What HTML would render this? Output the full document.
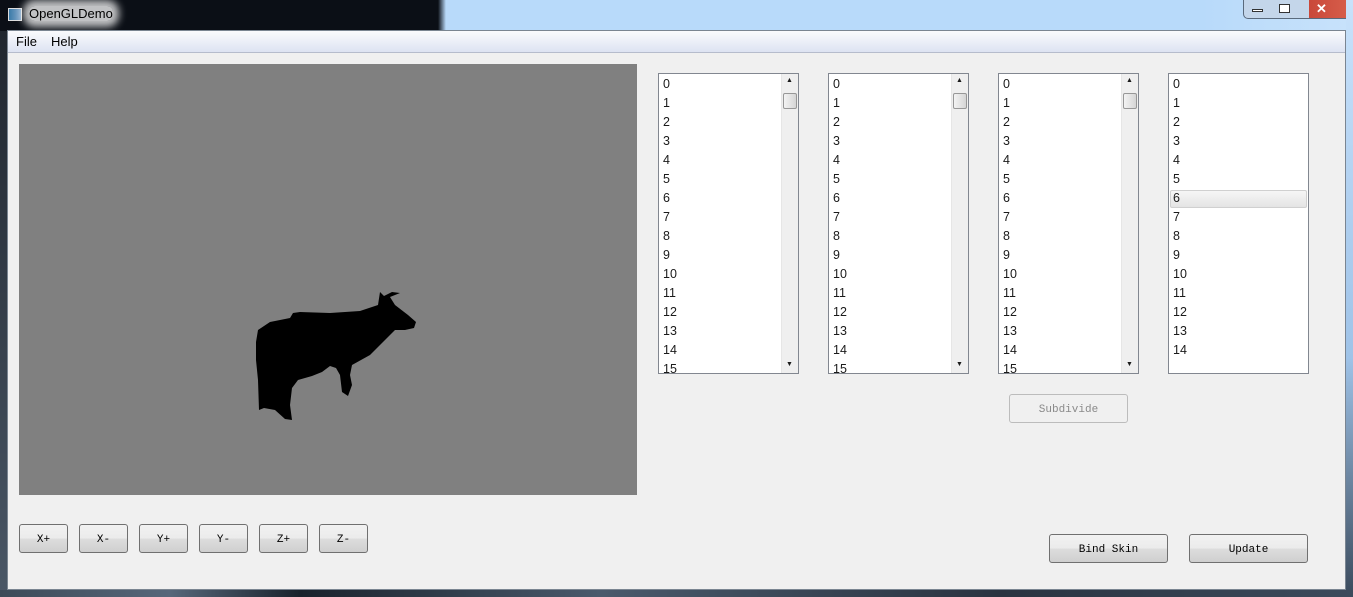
<!DOCTYPE html>
<html><head><style>
*{margin:0;padding:0;box-sizing:border-box}
body{width:1353px;height:597px;position:relative;overflow:hidden;background:#0c1118;font-family:"Liberation Sans",sans-serif}
.abs{position:absolute}
.title{left:0;top:0;width:1353px;height:31px;background:linear-gradient(90deg,#0b0f16 0,#0b0f16 438px,#b8dafa 446px,#b8dafa 1200px,#c8e2fb 1353px)}
.frameR{left:1346px;top:0;width:7px;height:597px;background:linear-gradient(180deg,#c8e2fb,#9fc3e8 60%,#3a4a5c)}
.frameB{left:0;top:590px;width:1353px;height:7px;background:linear-gradient(90deg,#3d4a58,#56677a 170px,#1a222c 300px,#4a5a6c 600px,#2a3340 1000px,#3c4b5c)}
.frameL{left:0;top:31px;width:7px;height:566px;background:linear-gradient(180deg,#20262e,#4a5766)}
.client{left:7px;top:30px;width:1339px;height:560px;background:#f0f0f0;border:1px solid #7a8591}
.menu{left:8px;top:31px;width:1337px;height:22px;background:linear-gradient(#fafbfd,#dde3f2);border-bottom:1px solid #b6bccc;font-size:13px;color:#000}
.menu span{position:absolute;top:3px}
.gl{left:19px;top:64px;width:618px;height:431px;background:#808080}
.list{width:141px;height:301px;top:73px;background:#fff;border:1px solid #828790;font-size:12.5px;color:#1a1a1a;overflow:hidden}
.list .it{position:absolute;left:4px;height:19px;line-height:19px;top:0}
.list .sb{position:absolute;left:auto;right:0;top:0;width:17px;height:299px;background:#efefef;border-left:1px solid #e6e6e6}
.list .thumb{position:absolute;left:1px;top:19px;width:14px;height:16px;border:1px solid #979797;border-radius:2px;background:linear-gradient(90deg,#f3f3f3,#d5d5d5)}
.list .sel{position:absolute;left:1px;top:116px;width:137px;height:18px;border:1px solid #d0d0d0;border-radius:2px;background:linear-gradient(#f6f6f6,#e4e4e4)}
.btn{height:29px;border:1px solid #707070;border-radius:3px;background:linear-gradient(#f2f2f2 0,#ebebeb 50%,#dddddd 51%,#cfcfcf);font-family:"Liberation Mono",monospace;font-size:11px;text-align:center;line-height:30px;color:#000}
</style></head><body>
<div class="abs title"></div>
<div class="abs" style="left:8px;top:8px;width:14px;height:13px;background:linear-gradient(90deg,#3a7aa8,#8ac);border:1px solid #ddd"></div>
<div class="abs" style="left:29px;top:6px;font-size:13px;color:#000;background:rgba(255,255,255,0.75);box-shadow:0 0 8px 6px rgba(255,255,255,0.75);border-radius:6px">OpenGLDemo</div>
<div class="abs" style="left:1243px;top:0;width:110px;height:19px;border:1px solid #5a6a7c;border-top:none;border-radius:0 0 5px 5px;background:linear-gradient(90deg,#c4d6ea 0,#c4d6ea 60%,#c9483a 60%,#d8604c)"></div>
<div class="abs" style="left:1252px;top:9px;width:11px;height:3px;border:1px solid #333;background:#fff"></div>
<div class="abs" style="left:1279px;top:4px;width:11px;height:9px;border:1px solid #333;background:#fff"></div>
<div class="abs" style="left:1316px;top:1px;color:#fff;font-size:13px;font-weight:bold">✕</div>
<div class="abs frameL"></div>
<div class="abs frameR"></div>
<div class="abs frameB"></div>
<div class="abs client"></div>
<div class="abs menu"><span style="left:8px">File</span><span style="left:43px">Help</span></div>
<div class="abs gl">
<svg width="618" height="431" viewBox="19 64 618 431"><polygon fill="#000" points="256,342 258,330 270,322 290,318 293,313 300,312 330,313 360,311 378,305 380,292 384,296 392,292 400,293 390,297 395,305 408,315 416,322 414,328 405,330 395,330 385,340 370,355 352,365 350,375 352,385 348,396 342,392 340,375 336,368 330,366 322,372 312,376 298,380 292,388 290,405 292,420 285,419 275,410 264,408 259,410 258,380 256,360"/></svg>
</div>

<div class="abs list" style="left:658px"><div class="it" style="top:1px">0</div><div class="it" style="top:20px">1</div><div class="it" style="top:39px">2</div><div class="it" style="top:58px">3</div><div class="it" style="top:77px">4</div><div class="it" style="top:96px">5</div><div class="it" style="top:115px">6</div><div class="it" style="top:134px">7</div><div class="it" style="top:153px">8</div><div class="it" style="top:172px">9</div><div class="it" style="top:191px">10</div><div class="it" style="top:210px">11</div><div class="it" style="top:229px">12</div><div class="it" style="top:248px">13</div><div class="it" style="top:267px">14</div><div class="it" style="top:286px">15</div><div class="sb"><span style="position:absolute;left:4px;top:3px;font-size:7px">▲</span><div class="thumb"></div><span style="position:absolute;left:4px;top:287px;font-size:7px">▼</span></div></div>
<div class="abs list" style="left:828px"><div class="it" style="top:1px">0</div><div class="it" style="top:20px">1</div><div class="it" style="top:39px">2</div><div class="it" style="top:58px">3</div><div class="it" style="top:77px">4</div><div class="it" style="top:96px">5</div><div class="it" style="top:115px">6</div><div class="it" style="top:134px">7</div><div class="it" style="top:153px">8</div><div class="it" style="top:172px">9</div><div class="it" style="top:191px">10</div><div class="it" style="top:210px">11</div><div class="it" style="top:229px">12</div><div class="it" style="top:248px">13</div><div class="it" style="top:267px">14</div><div class="it" style="top:286px">15</div><div class="sb"><span style="position:absolute;left:4px;top:3px;font-size:7px">▲</span><div class="thumb"></div><span style="position:absolute;left:4px;top:287px;font-size:7px">▼</span></div></div>
<div class="abs list" style="left:998px"><div class="it" style="top:1px">0</div><div class="it" style="top:20px">1</div><div class="it" style="top:39px">2</div><div class="it" style="top:58px">3</div><div class="it" style="top:77px">4</div><div class="it" style="top:96px">5</div><div class="it" style="top:115px">6</div><div class="it" style="top:134px">7</div><div class="it" style="top:153px">8</div><div class="it" style="top:172px">9</div><div class="it" style="top:191px">10</div><div class="it" style="top:210px">11</div><div class="it" style="top:229px">12</div><div class="it" style="top:248px">13</div><div class="it" style="top:267px">14</div><div class="it" style="top:286px">15</div><div class="sb"><span style="position:absolute;left:4px;top:3px;font-size:7px">▲</span><div class="thumb"></div><span style="position:absolute;left:4px;top:287px;font-size:7px">▼</span></div></div>
<div class="abs list" style="left:1168px"><div class="sel"></div><div class="it" style="top:1px">0</div><div class="it" style="top:20px">1</div><div class="it" style="top:39px">2</div><div class="it" style="top:58px">3</div><div class="it" style="top:77px">4</div><div class="it" style="top:96px">5</div><div class="it" style="top:115px">6</div><div class="it" style="top:134px">7</div><div class="it" style="top:153px">8</div><div class="it" style="top:172px">9</div><div class="it" style="top:191px">10</div><div class="it" style="top:210px">11</div><div class="it" style="top:229px">12</div><div class="it" style="top:248px">13</div><div class="it" style="top:267px">14</div></div>

<div class="abs btn" style="left:1009px;top:394px;width:119px;background:#f0f0f0;border-color:#bcbcbc;color:#8a8a8a">Subdivide</div>
<div class="abs btn" style="left:19px;top:524px;width:49px">X+</div>
<div class="abs btn" style="left:79px;top:524px;width:49px">X-</div>
<div class="abs btn" style="left:139px;top:524px;width:49px">Y+</div>
<div class="abs btn" style="left:199px;top:524px;width:49px">Y-</div>
<div class="abs btn" style="left:259px;top:524px;width:49px">Z+</div>
<div class="abs btn" style="left:319px;top:524px;width:49px">Z-</div>
<div class="abs btn" style="left:1049px;top:534px;width:119px">Bind Skin</div>
<div class="abs btn" style="left:1189px;top:534px;width:119px">Update</div>
</body></html>
